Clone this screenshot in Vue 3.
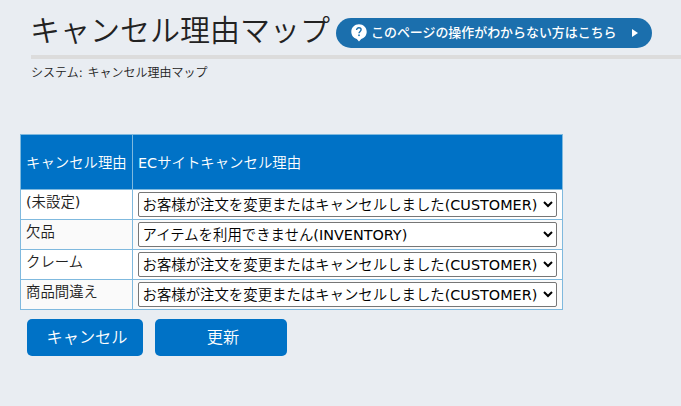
<script setup>
import { ref } from 'vue';

const options = [
  { value: 'CUSTOMER', label: 'お客様が注文を変更またはキャンセルしました(CUSTOMER)' },
  { value: 'INVENTORY', label: 'アイテムを利用できません(INVENTORY)' },
];

const defaults = [
  { id: 1, name: '(未設定)', reason: 'CUSTOMER' },
  { id: 2, name: '欠品', reason: 'INVENTORY' },
  { id: 3, name: 'クレーム', reason: 'CUSTOMER' },
  { id: 4, name: '商品間違え', reason: 'CUSTOMER' },
];

const saved = ref(defaults.map((row) => ({ ...row })));
const rows = ref(defaults.map((row) => ({ ...row })));

const cancel = () => {
  rows.value = saved.value.map((row) => ({ ...row }));
};

const update = () => {
  saved.value = rows.value.map((row) => ({ ...row }));
};
</script>

<template>
  <div class="page">
    <header class="page-header">
      <h1>キャンセル理由マップ</h1>
      <a href="#" class="help-link">
        <svg class="help-icon" width="16" height="18" viewBox="0 0 16 18">
          <path d="M8 0.3C3.6 0.3 0.3 3.6 0.3 7.8c0 3.7 2.4 6.5 5.5 7.2L8 17.5l2.2-2.5c3.1-.7 5.5-3.5 5.5-7.2C15.7 3.6 12.4.3 8 .3z" fill="#fff" />
          <path d="M5.6 6.1c0-1.5.9-2.3 2.3-2.3s2.2.8 2.2 2c0 1.6-2.1 1.7-2.1 3.5" fill="none" stroke="#1b6fad" stroke-width="1.4" />
          <rect x="7.2" y="10.5" width="1.6" height="1.6" fill="#1b6fad" />
        </svg>
        <span class="help-text">このページの操作がわからない方はこちら</span>
        <svg class="help-arrow" width="6" height="8" viewBox="0 0 6 8">
          <path d="M0 0l6 4-6 4z" fill="#fff" />
        </svg>
      </a>
    </header>
    <div class="breadcrumb">システム: キャンセル理由マップ</div>

    <table>
      <thead>
        <tr>
          <th class="col-name">キャンセル理由</th>
          <th>ECサイトキャンセル理由</th>
        </tr>
      </thead>
      <tbody>
        <tr v-for="row in rows" :key="row.id">
          <td class="name">{{ row.name }}</td>
          <td class="reason">
            <select v-model="row.reason">
              <option v-for="o in options" :key="o.value" :value="o.value">{{ o.label }}</option>
            </select>
          </td>
        </tr>
      </tbody>
    </table>

    <div class="actions">
      <button type="button" class="btn-cancel" @click="cancel">キャンセル</button>
      <button type="button" class="btn-update" @click="update">更新</button>
    </div>
  </div>
</template>

<style>
body {
  background: #e9edf2;
  overflow: hidden;
}
</style>

<style scoped>
.page {
  box-sizing: border-box;
  height: 406px;
  font-family: "DejaVu Sans", "Noto Sans CJK JP DemiLight", "Noto Sans CJK JP", sans-serif;
  font-weight: 400;
  color: #222;
}

.page-header {
  display: flex;
  align-items: flex-start;
  box-sizing: border-box;
  height: 59px;
  margin-left: 31px;
  border-bottom: 4px solid #dcdcdc;
}

h1 {
  flex: none;
  width: 306px;
  margin: 6px 0 0 -1px;
  font-family: "Noto Sans CJK JP", sans-serif;
  font-size: 30px;
  line-height: 44px;
  font-weight: 350;
  white-space: nowrap;
}

.help-link {
  display: flex;
  flex: none;
  align-items: center;
  box-sizing: border-box;
  width: 316px;
  height: 30px;
  margin: 18px 0 0;
  padding: 0 14px 0 15px;
  border-radius: 15px;
  background: #1b6fad;
  color: #fff;
  text-decoration: none;
}

.help-text {
  margin-left: 4px;
  padding-bottom: 2px;
  font-family: "Noto Sans CJK JP", sans-serif;
  font-size: 12.95px;
  font-weight: 500;
  line-height: 28px;
  white-space: nowrap;
}

.help-arrow { margin-left: auto; }

.breadcrumb {
  height: 28px;
  margin-left: 31px;
  font-size: 12px;
  line-height: 28px;
  word-spacing: 1px;
}

table {
  width: 543px;
  margin: 47px 0 0 20px;
  border-collapse: collapse;
  table-layout: fixed;
  font-size: 14.4px;
}

th, td {
  box-sizing: border-box;
  border: 1px solid #7fb9de;
  text-align: left;
}

th {
  height: 55px;
  padding: 0 5px 2px;
  background: #0072c6;
  color: #fff;
  font-weight: 400;
  white-space: nowrap;
}

.col-name { width: 112px; }

td {
  height: 30px;
  background: #fff;
}

tbody tr:nth-child(even) td { background: #fafafa; }

.name {
  padding: 0 5px 5px;
  line-height: 24px;
}

.reason { padding: 0 5px; }

select {
  display: block;
  width: 419px;
  height: 25px;
  margin: 0;
  padding: 0 2px 0 0;
  border: 1px solid #767676;
  border-radius: 2px;
  background: #fff;
  color: #000;
  font: inherit;
  text-indent: -0.5px;
}

.actions {
  display: flex;
  gap: 12px;
  margin: 9px 0 0 27px;
}

button {
  height: 37px;
  padding: 0 0 3px;
  border: none;
  border-radius: 5px;
  background: #0072c6;
  color: #fff;
  font-family: inherit;
  font-size: 16.2px;
  font-weight: 400;
  cursor: pointer;
}

.btn-cancel { width: 116px; padding-left: 4px; }
.btn-update { width: 132px; padding-left: 4px; }
</style>
